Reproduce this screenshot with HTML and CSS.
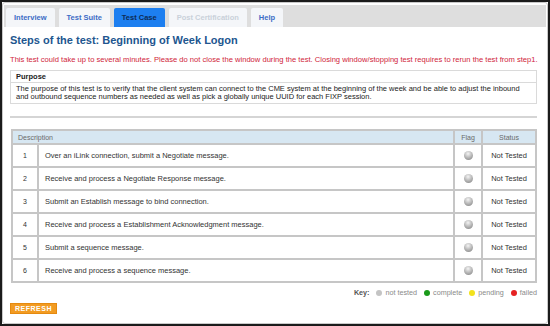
FILE: index.html
```html
<!DOCTYPE html>
<html lang="en">
<head>
  <meta charset="UTF-8" />
  <title>Test Case</title>
  <link rel="stylesheet" href="styles.css">
</head>
<body>
  <div class="frame">
    <div class="window">
      <nav class="tabs">
        <a class="tab">Interview</a>
        <a class="tab">Test Suite</a>
        <a class="tab active">Test Case</a>
        <a class="tab disabled">Post Certification</a>
        <a class="tab">Help</a>
      </nav>
      <main class="content">
        <h1 class="title">Steps of the test: Beginning of Week Logon</h1>
        <p class="warning">This test could take up to several minutes. Please do not close the window during the test. Closing window/stopping test requires to rerun the test from step1.</p>
        <div class="purpose">
          <div class="purpose-head">Purpose</div>
          <div class="purpose-body">The purpose of this test is to verify that the client system can connect to the CME system at the beginning of the week and be able to adjust the inbound and outbound sequence numbers as needed as well as pick a globally unique UUID for each FIXP session.</div>
        </div>
        <hr class="divider">
        <table class="steps">
          <thead>
            <tr>
              <th colspan="2" class="desc-head">Description</th>
              <th class="flag">Flag</th>
              <th class="status">Status</th>
            </tr>
          </thead>
          <tbody>
            <tr><td class="num">1</td><td class="desc">Over an iLink connection, submit a Negotiate message.</td><td class="flag"><span class="flag-dot"></span></td><td class="status">Not Tested</td></tr>
            <tr><td class="num">2</td><td class="desc">Receive and process a Negotiate Response message.</td><td class="flag"><span class="flag-dot"></span></td><td class="status">Not Tested</td></tr>
            <tr><td class="num">3</td><td class="desc">Submit an Establish message to bind connection.</td><td class="flag"><span class="flag-dot"></span></td><td class="status">Not Tested</td></tr>
            <tr><td class="num">4</td><td class="desc">Receive and process a Establishment Acknowledgment message.</td><td class="flag"><span class="flag-dot"></span></td><td class="status">Not Tested</td></tr>
            <tr><td class="num">5</td><td class="desc">Submit a sequence message.</td><td class="flag"><span class="flag-dot"></span></td><td class="status">Not Tested</td></tr>
            <tr><td class="num">6</td><td class="desc">Receive and process a sequence message.</td><td class="flag"><span class="flag-dot"></span></td><td class="status">Not Tested</td></tr>
          </tbody>
        </table>
        <div class="key">
          <b>Key:</b>
          <span class="key-item"><i class="dot gray"></i>not tested</span>
          <span class="key-item"><i class="dot green"></i>complete</span>
          <span class="key-item"><i class="dot yellow"></i>pending</span>
          <span class="key-item"><i class="dot red"></i>failed</span>
        </div>
        <button class="refresh">REFRESH</button>
      </main>
    </div>
  </div>
</body>
</html>
```

FILE: styles.css
```css
body {
  margin: 0;
  font-family: "Liberation Sans", Arial, sans-serif;
  background: #fff;
}
.frame {
  width: 550px;
  height: 326px;
  box-sizing: border-box;
  border: 2px solid #1b1b1b;
  background: #fff;
}
.window {
  height: 100%;
  box-sizing: border-box;
  border: 1px solid #c9c9c9;
  border-radius: 3px;
  padding: 2px 1px 0 1px;
}
.tabs {
  display: flex;
  gap: 4px;
  height: 22px;
  box-sizing: border-box;
  padding: 3px 0 0 2px;
  background: #dedede;
}
.tab {
  display: flex;
  align-items: center;
  padding: 0 8px;
  font-size: 7.5px;
  font-weight: bold;
  color: #3b6cc6;
  background: #f4f6f9;
  border-radius: 2px 2px 0 0;
}
.tab.active {
  background: #1d7ff0;
  color: #0d2b55;
}
.tab.disabled {
  color: #c9d1da;
}
.content {
  padding: 6px 9px 0 6px;
}
.title {
  margin: 0;
  font-size: 11px;
  line-height: 14px;
  color: #22568f;
}
.warning {
  margin: 8px 0 0;
  font-size: 7.6px;
  line-height: 9px;
  color: #d0253a;
  white-space: nowrap;
}
.purpose {
  margin-top: 6px;
  border: 1px solid #dadada;
  font-size: 7.5px;
  color: #222;
}
.purpose-head {
  font-weight: bold;
  line-height: 11px;
  padding: 0 5px;
  border-bottom: 1px solid #dadada;
}
.purpose-body {
  line-height: 8px;
  padding: 2px 12px 2px 5px;
}
.divider {
  margin: 12px 0 0;
  border: 0;
  height: 2px;
  background: #d5d5d5;
}
.steps {
  width: 526px;
  margin: 11px 0 0 1px;
  border-collapse: collapse;
  font-size: 7px;
}
.steps th {
  height: 12px;
  padding: 0;
  background: #d7e7f2;
  color: #6a6a6a;
  font-weight: normal;
  border: 2px solid #c6c6c6;
}
.steps th.desc-head {
  text-align: left;
  padding-left: 5px;
}
.steps td {
  height: 21px;
  padding: 0;
  border: 2px solid #c6c6c6;
  color: #333;
  font-size: 7.5px;
}
.steps .num {
  width: 24px;
  text-align: center;
  font-size: 7px;
}
.steps .desc {
  padding-left: 6px;
}
.steps .flag {
  width: 26px;
  text-align: center;
}
.steps .status {
  width: 52px;
  text-align: center;
}
.flag-dot {
  display: inline-block;
  width: 9px;
  height: 9px;
  border-radius: 50%;
  vertical-align: middle;
  background: radial-gradient(circle at 45% 30%, #f4f4f4 0, #bdbdbd 45%, #7c7c7c 100%);
}
.key {
  margin-top: 6px;
  display: flex;
  justify-content: flex-end;
  align-items: center;
  gap: 7px;
  font-size: 7.2px;
  line-height: 8px;
  color: #8a8a8a;
}
.key b {
  color: #555;
}
.key-item {
  display: flex;
  align-items: center;
}
.dot {
  display: inline-block;
  width: 6px;
  height: 6px;
  border-radius: 50%;
  margin-right: 3px;
}
.dot.gray { background: #c4c4c4; }
.dot.green { background: #1a9a1a; }
.dot.yellow { background: #f2e21c; }
.dot.red { background: #e52222; }
.refresh {
  display: block;
  margin-top: 6px;
  width: 47px;
  height: 11px;
  padding: 0;
  background: #f29b22;
  border: 1px solid #e58a10;
  color: #fff;
  font-family: "Liberation Sans", Arial, sans-serif;
  font-size: 7px;
  font-weight: bold;
  letter-spacing: 0.5px;
  line-height: 9px;
}
```
